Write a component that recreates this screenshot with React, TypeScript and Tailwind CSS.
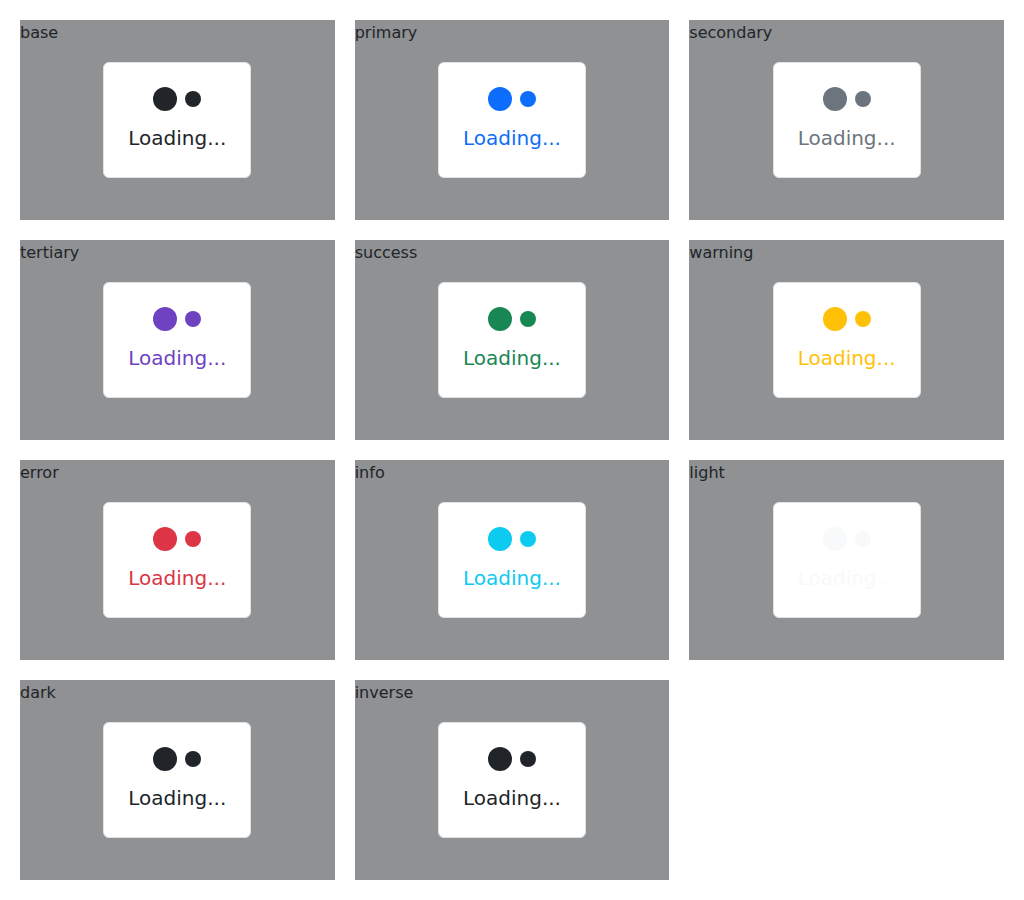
const variants = [
  { name: 'base', color: 'text-[#212529]', dot: 'bg-[#212529]' },
  { name: 'primary', color: 'text-[#0d6efd]', dot: 'bg-[#0d6efd]' },
  { name: 'secondary', color: 'text-[#6c757d]', dot: 'bg-[#6c757d]' },
  { name: 'tertiary', color: 'text-[#6f42c1]', dot: 'bg-[#6f42c1]' },
  { name: 'success', color: 'text-[#198754]', dot: 'bg-[#198754]' },
  { name: 'warning', color: 'text-[#ffc107]', dot: 'bg-[#ffc107]' },
  { name: 'error', color: 'text-[#dc3545]', dot: 'bg-[#dc3545]' },
  { name: 'info', color: 'text-[#0dcaf0]', dot: 'bg-[#0dcaf0]' },
  { name: 'light', color: 'text-[#f8f9fa]', dot: 'bg-[#f8f9fa]' },
  { name: 'dark', color: 'text-[#212529]', dot: 'bg-[#212529]' },
  { name: 'inverse', color: 'text-[#212529]', dot: 'bg-[#212529]' }
];

export default function App() {
  return (
    <div
      className="min-h-screen bg-white p-5 text-[#212529]"
      style={{ fontFamily: '"DejaVu Sans", sans-serif' }}
    >
      <div className="grid grid-cols-3 gap-5">
        {variants.map((v) => (
          <div key={v.name} className="relative flex h-[200px] items-center justify-center bg-[#8f9193]">
            <span className="absolute left-0 top-px text-base leading-6 text-[#212529]">{v.name}</span>
            <div className="flex w-[148px] flex-col items-center rounded-md border border-[#dee2e6] bg-white px-6 pt-6 pb-6">
              <div className="flex h-6 items-center gap-2">
                <span className={`h-6 w-6 rounded-full ${v.dot}`} />
                <span className={`h-4 w-4 rounded-full ${v.dot}`} />
              </div>
              <p className={`mt-3 whitespace-nowrap text-xl leading-[30px] ${v.color}`}>Loading...</p>
            </div>
          </div>
        ))}
      </div>
    </div>
  );
}
